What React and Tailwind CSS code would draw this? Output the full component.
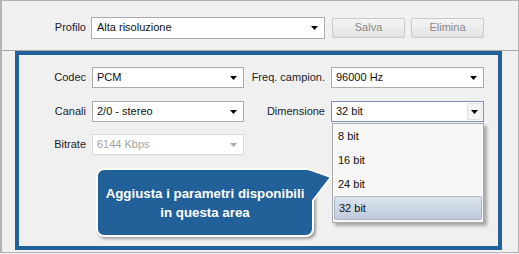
import React from "react";

function Arrow({ color = "#000" }) {
  return (
    <svg width="7" height="4" viewBox="0 0 7 4" className="block">
      <polygon points="0,0 7,0 3.5,4" fill={color} />
    </svg>
  );
}

function Select({ value, width, disabled = false, focused = false }) {
  return (
    <div
      className={
        "h-[21px] flex items-center bg-white border " +
        (disabled
          ? "border-[#d9d9d9] text-[#a3a3a3]"
          : focused
          ? "border-[#7d8fb6] text-[#111]"
          : "border-[#acacac] text-[#111]")
      }
      style={{ width }}
    >
      <span className="flex-1 pl-[4px] leading-none">{value}</span>
      {focused ? (
        <div className="w-[15px] h-[17px] mr-[1px] flex items-center justify-center border border-[#e2e2e2] bg-[#f6f6f6]">
          <Arrow />
        </div>
      ) : (
        <div className="w-[15px] h-full mr-[2px] flex items-center justify-center">
          <Arrow color={disabled ? "#a8a8a8" : "#000"} />
        </div>
      )}
    </div>
  );
}

function Button({ children }) {
  return (
    <div className="w-[73px] h-[20px] flex items-center justify-center rounded-[2px] border border-[#c9c9c9] bg-gradient-to-b from-[#f4f4f4] to-[#e3e3e3] text-[#8a8a8a]">
      {children}
    </div>
  );
}

export default function App() {
  return (
    <div className="w-[519px] h-[254px] bg-[#f0f0f0] font-['Liberation_Sans',Arial,sans-serif] text-[11px] text-[#1c1c2c]">
      <div className="h-[253px] border-t border-r border-b border-l-2 border-[#b3b3b3]">
        {/* top */}
        <div className="h-[50px] border-b border-[#a7a7a7] flex items-center pt-[4px]">
          <div className="w-[84px] text-right">Profilo</div>
          <div className="ml-[5px] h-[22px] w-[234px] flex items-center bg-white border border-[#acacac] text-[#111]">
            <span className="flex-1 pl-[5px]">Alta risoluzione</span>
            <div className="w-[15px] mr-[2px] flex justify-center">
              <Arrow />
            </div>
          </div>
          <div className="ml-[7px]">
            <Button>Salva</Button>
          </div>
          <div className="ml-[6px]">
            <Button>Elimina</Button>
          </div>
        </div>
        {/* bottom */}
        <div className="h-[201px] pt-0">
          <div className="relative ml-[13px] w-[487px] h-[199px] border-4 border-[#22609a] pt-[12px]">
            <div className="flex items-center h-[21px]">
              <div className="w-[67px] text-right">Codec</div>
              <div className="ml-[6px]">
                <Select value="PCM" width={152} />
              </div>
              <div className="w-[81px] text-right">Freq. campion.</div>
              <div className="ml-[6px]">
                <Select value="96000 Hz" width={153} />
              </div>
            </div>
            <div className="flex items-center h-[21px] mt-[13px]">
              <div className="w-[67px] text-right">Canali</div>
              <div className="ml-[6px]">
                <Select value="2/0 - stereo" width={152} />
              </div>
              <div className="w-[81px] text-right">Dimensione</div>
              <div className="ml-[6px]">
                <Select value="32 bit" width={153} focused />
              </div>
            </div>
            <div className="flex items-center h-[21px] mt-[12px]">
              <div className="w-[67px] text-right">Bitrate</div>
              <div className="ml-[6px]">
                <Select value="6144 Kbps" width={152} disabled />
              </div>
            </div>

            {/* dropdown list */}
            <div className="absolute left-[313px] top-[68px] w-[152px] h-[100px] bg-[#f7f7f7] border border-[#a9a9a9] shadow-[3px_3px_3px_rgba(0,0,0,0.3)] text-[#111]">
              <div className="h-[24px] flex items-center pl-[5px]">8 bit</div>
              <div className="h-[24px] flex items-center pl-[5px]">16 bit</div>
              <div className="h-[24px] flex items-center pl-[5px]">24 bit</div>
              <div className="h-[24px] mx-px flex items-center pl-[4px] rounded-[2px] border border-[#aab5c6] bg-gradient-to-b from-[#dbe3ee] to-[#bfcbdc]">
                32 bit
              </div>
            </div>

            {/* callout */}
            <div className="absolute left-[77px] top-[113px] w-[218px] h-[69px] rounded-[8px] border-2 border-white bg-[#22609a] shadow-[2px_2px_3px_rgba(0,0,0,0.35)] flex flex-col items-center justify-center font-bold text-white text-[13.3px] leading-[19px] font-['Liberation_Sans',Arial,sans-serif]">
              <div>Aggiusta i parametri disponibili</div>
              <div>in questa area</div>
            </div>
            <svg
              className="absolute left-[281px] top-[110px]"
              width="35"
              height="40"
              viewBox="0 0 35 40"
            >
              <polygon points="8,5 31,12 13,35 8,35" fill="#22609a" />
              <polyline
                points="10,4.5 31,12 13,35.5"
                fill="none"
                stroke="#ffffff"
                strokeWidth="2"
                strokeLinejoin="miter"
              />
            </svg>
          </div>
        </div>
      </div>
    </div>
  );
}
